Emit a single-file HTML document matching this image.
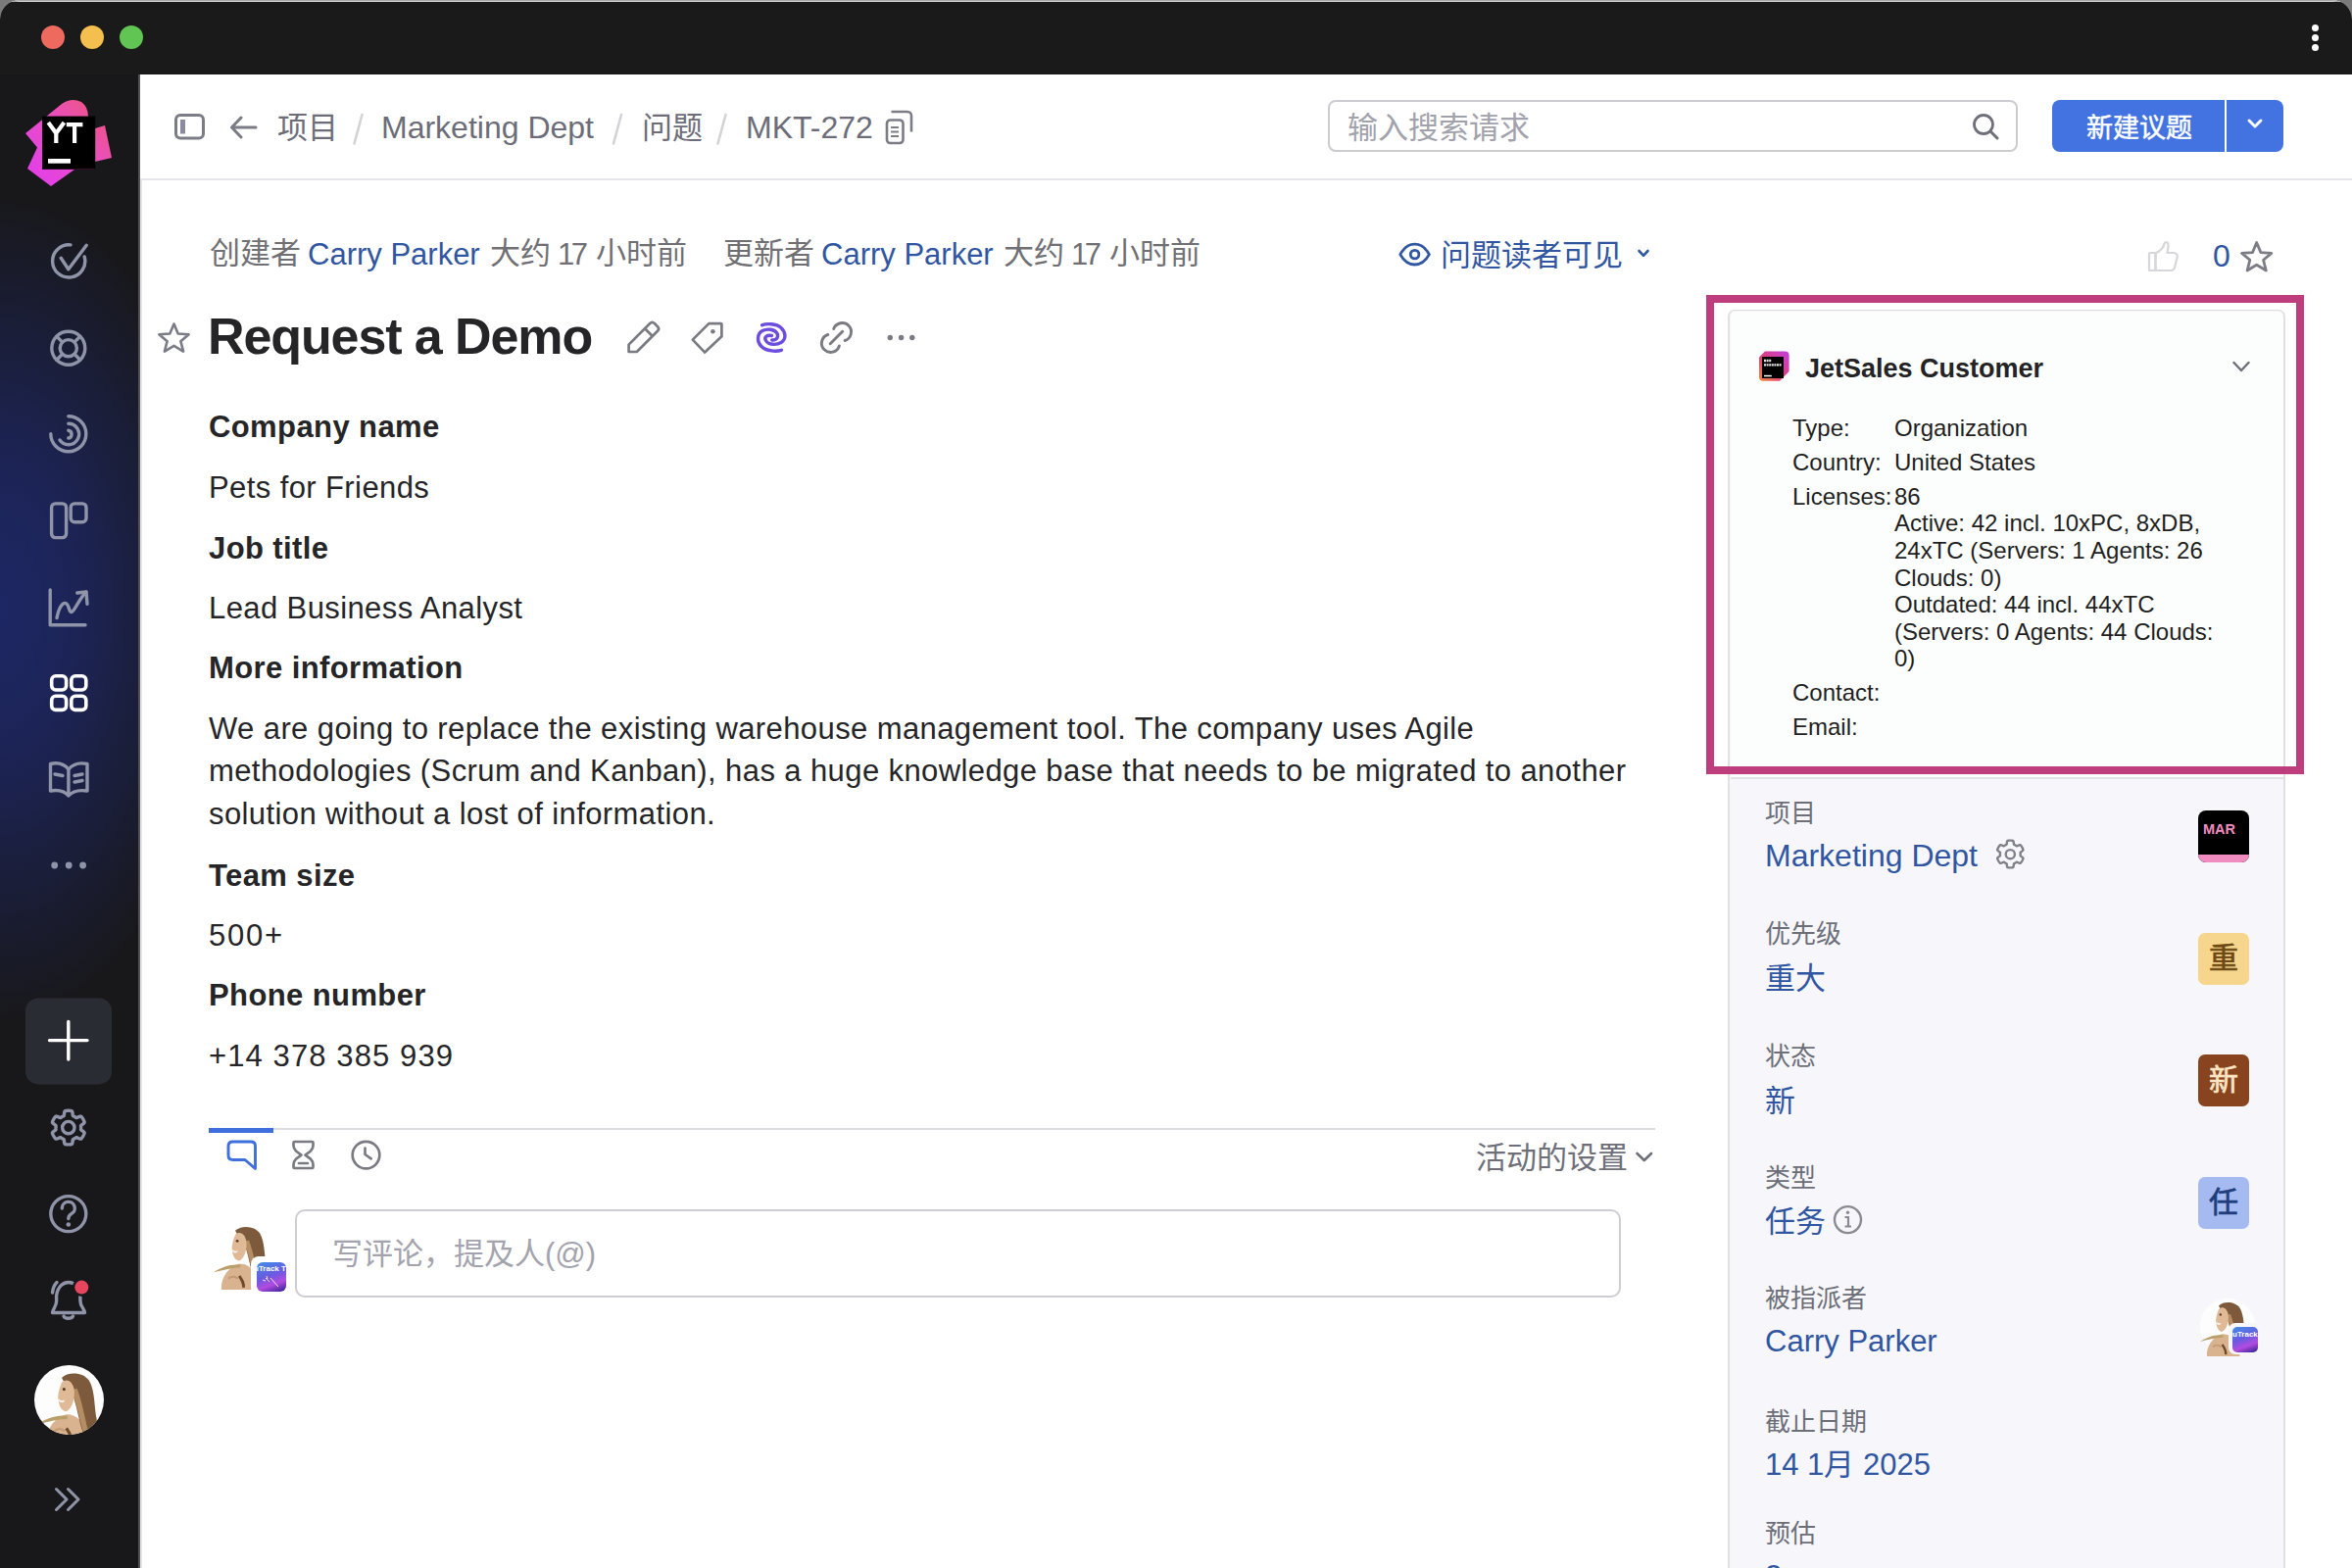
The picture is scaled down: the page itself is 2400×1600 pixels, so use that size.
<!DOCTYPE html>
<html lang="zh-CN">
<head>
<meta charset="utf-8">
<style>
html,body{margin:0;padding:0;}
body{width:2400px;height:1600px;position:relative;overflow:hidden;background:#7a7a7a;font-family:"Liberation Sans",sans-serif;}
.a{position:absolute;}
.t{position:absolute;white-space:nowrap;line-height:1;}
svg{position:absolute;overflow:visible;}
#win{position:absolute;left:0;top:0;width:2400px;height:1600px;border-radius:20px 20px 0 0;overflow:hidden;background:#fff;box-shadow:inset 0 1.5px 0 #a8a8a8;}
#titlebar{position:absolute;left:0;top:1.5px;width:2400px;height:74.5px;background:#1a1a1b;}
.light{position:absolute;width:24px;height:24px;border-radius:50%;top:26px;}
#sidebar{position:absolute;left:0;top:76px;width:141px;height:1524px;background:#18181b;overflow:hidden;}
#sbline{position:absolute;left:141px;top:76px;width:2px;height:1524px;background:#525255;}
#header{position:absolute;left:143px;top:76px;width:2257px;height:106px;background:#fff;}
#hline{position:absolute;left:143px;top:182px;width:2257px;height:2px;background:#e4e4e8;}
.crumb{color:#6c6d78;font-size:32px;}
.slash{color:#d0d0d5;font-size:32px;}
.grey{color:#707074;}
.blue{color:#3056a2;}
.flab{font-size:26px;color:#6c6e78;}
.badge{left:2243px;width:52px;height:52.5px;border-radius:7px;font-size:30px;line-height:52px;text-align:center;-webkit-text-stroke:0.7px currentColor;}
</style>
</head>
<body>
<svg width="0" height="0" style="position:absolute">
  <defs>
    <filter id="avb" x="-10%" y="-10%" width="120%" height="120%"><feGaussianBlur stdDeviation="0.9"/></filter>
    <symbol id="av" viewBox="0 0 100 100">
      <g filter="url(#avb)">
      <path d="M30 100 C28 84 40 66 56 62 C70 62 80 72 84 90 L86 100 Z" fill="#d9b38f"/>
      <path d="M50 14 C58 6 78 6 86 18 C94 32 92 52 96 70 C92 80 84 84 78 86 C72 70 70 50 64 36 C60 28 54 22 50 14 Z" fill="#7d5a3a"/>
      <path d="M62 30 C70 46 72 64 78 84 L84 82 C80 64 76 44 70 28 Z" fill="#b48e62"/>
      <path d="M50 20 C56 14 64 18 66 28 C68 40 64 54 56 58 C50 58 46 50 46 44 C44 40 46 30 50 20 Z" fill="#e0b996"/>
      <path d="M45.5 41 Q50 46 54 42.5 L53 45.5 Q49 48 46 44 Z" fill="#fbf4ee"/>
      <circle cx="53" cy="29" r="2" fill="#5a3a22"/>
      <path d="M18 75 C30 67 44 62 58 64 L57 68 C44 68 32 72 18 75 Z" fill="#b9a06a"/>
      <path d="M56 80 C60 86 63 90 62 97" stroke="#6e4a2c" stroke-width="4" fill="none"/>
      <path d="M40 84 C44 80 50 80 54 84" stroke="#c49a74" stroke-width="3" fill="none"/>
      </g>
    </symbol>
  </defs>
</svg>
<div id="win">
  <div id="titlebar"></div>
  <div class="light" style="left:42px;background:#ee6a5f"></div>
  <div class="light" style="left:82px;background:#f5bf4f"></div>
  <div class="light" style="left:122px;background:#61c554"></div>
  <div class="a" style="left:2359px;top:25px;width:7px;height:7px;border-radius:50%;background:#fff"></div>
  <div class="a" style="left:2359px;top:35px;width:7px;height:7px;border-radius:50%;background:#fff"></div>
  <div class="a" style="left:2359px;top:45px;width:7px;height:7px;border-radius:50%;background:#fff"></div>

  <div id="sidebar">
    <div class="a" style="left:-230px;top:125px;width:460px;height:840px;background:radial-gradient(closest-side,#1d2764 0%,rgba(29,38,96,0.85) 35%,rgba(24,24,27,0) 100%)"></div>
  </div>

  <!-- sidebar icons -->
  <svg style="left:0;top:0" width="141" height="1600">
    <defs>
      <linearGradient id="ytg" x1="0" y1="1" x2="1" y2="0">
        <stop offset="0" stop-color="#e23cf2"/>
        <stop offset="0.55" stop-color="#e84fc0"/>
        <stop offset="1" stop-color="#f2566e"/>
      </linearGradient>
    </defs>
    <path d="M26 136 L47 119 L63 106 Q73 99 83 104 Q90 109 90 119 L97 119 L97 131 L107 128 L114 161 L97 165 L97 173 L76 173 L52 190 L28 172 L38 150.5 Z" fill="url(#ytg)"/>
    <rect x="43" y="118.6" width="54.2" height="54.2" fill="#000"/>
    <path d="M49.3 125 L57.3 136 L57.3 146 M65.4 125 L57.3 136 M67.8 127.2 H84.4 M76.1 127.2 V146" fill="none" stroke="#fff" stroke-width="4.2"/>
    <rect x="49" y="162" width="23" height="4.7" fill="#fff"/>
    <g fill="none" stroke="#8f94a8" stroke-width="3.4" stroke-linecap="round" stroke-linejoin="round">
      <!-- check -->
      <path d="M72 249.9 A16.6 16.6 0 1 0 86.2 262"/>
      <path d="M62.2 263.3 L69.8 274.8 L88.2 250.3"/>
      <!-- lifebuoy -->
      <circle cx="69.8" cy="355.2" r="17"/>
      <circle cx="69.8" cy="355.2" r="8.6"/>
      <path d="M63.7 349.1 L57.8 343.2 M75.9 349.1 L81.8 343.2 M63.7 361.3 L57.8 367.2 M75.9 361.3 L81.8 367.2"/>
      <!-- spiral -->
      <path d="M69.8 424.8 A18 18 0 1 1 51.8 442.8"/>
      <path d="M69.8 432.3 A10.7 10.7 0 1 1 61 449"/>
      <path d="M69.8 439.3 A3.9 3.9 0 0 1 69.8 447"/>
      <!-- board -->
      <rect x="52.6" y="513.9" width="15" height="34.7" rx="4"/>
      <rect x="72.2" y="513.9" width="15.8" height="18.8" rx="4"/>
      <!-- chart -->
      <path d="M51.2 602 V637.8 H87"/>
      <path d="M58 630.6 C60 620 64 614.5 67 615.5 C71 617 70 625 73 624.5 C76 624 80 612 88 604"/>
      <path d="M78.8 605 L88 604 L89 616.3"/>
      <!-- book -->
      <path d="M69.9 812 C65 806 58 806 51.5 807 V779.5 C58 778 65 779 69.9 785 C75 779 82 778 89 779.5 V807 C82 806 75 806 69.9 812 Z"/>
      <path d="M69.9 785 V810"/>
      <path d="M56 790 L64 791.5 M76 791.5 L84 790 M76 798 L84 796.5"/>
      <!-- gear -->
      <path d="M82.60 1150.60 L82.60 1150.94 L82.58 1151.27 L82.56 1151.60 L82.53 1151.94 L82.49 1152.27 L82.53 1152.62 L82.93 1153.03 L83.61 1153.53 L84.43 1154.11 L85.24 1154.74 L85.86 1155.36 L86.17 1155.92 L86.11 1156.37 L85.95 1156.80 L85.78 1157.22 L85.60 1157.64 L85.41 1158.05 L85.21 1158.45 L85.00 1158.85 L84.78 1159.25 L84.55 1159.64 L84.31 1160.02 L84.06 1160.40 L83.80 1160.77 L83.53 1161.13 L83.24 1161.49 L82.96 1161.84 L82.59 1162.11 L81.95 1162.13 L81.10 1161.90 L80.16 1161.52 L79.24 1161.09 L78.47 1160.75 L77.91 1160.62 L77.59 1160.75 L77.32 1160.96 L77.05 1161.15 L76.77 1161.33 L76.49 1161.51 L76.20 1161.69 L75.91 1161.85 L75.61 1162.00 L75.31 1162.15 L75.01 1162.29 L74.70 1162.43 L74.42 1162.63 L74.26 1163.18 L74.16 1164.02 L74.07 1165.03 L73.94 1166.04 L73.71 1166.89 L73.38 1167.43 L72.95 1167.61 L72.51 1167.69 L72.06 1167.75 L71.61 1167.81 L71.16 1167.85 L70.71 1167.88 L70.25 1167.89 L69.80 1167.90 L69.35 1167.89 L68.89 1167.88 L68.44 1167.85 L67.99 1167.81 L67.54 1167.75 L67.09 1167.69 L66.65 1167.61 L66.22 1167.43 L65.89 1166.89 L65.66 1166.04 L65.53 1165.03 L65.44 1164.02 L65.34 1163.18 L65.18 1162.63 L64.90 1162.43 L64.59 1162.29 L64.29 1162.15 L63.99 1162.00 L63.69 1161.85 L63.40 1161.69 L63.11 1161.51 L62.83 1161.33 L62.55 1161.15 L62.28 1160.96 L62.01 1160.75 L61.69 1160.62 L61.13 1160.75 L60.36 1161.09 L59.44 1161.52 L58.50 1161.90 L57.65 1162.13 L57.01 1162.11 L56.64 1161.84 L56.36 1161.49 L56.07 1161.13 L55.80 1160.77 L55.54 1160.40 L55.29 1160.02 L55.05 1159.64 L54.82 1159.25 L54.60 1158.85 L54.39 1158.45 L54.19 1158.05 L54.00 1157.64 L53.82 1157.22 L53.65 1156.80 L53.49 1156.37 L53.43 1155.92 L53.74 1155.36 L54.36 1154.74 L55.17 1154.11 L55.99 1153.53 L56.67 1153.03 L57.07 1152.62 L57.11 1152.27 L57.07 1151.94 L57.04 1151.60 L57.02 1151.27 L57.00 1150.94 L57.00 1150.60 L57.00 1150.26 L57.02 1149.93 L57.04 1149.60 L57.07 1149.26 L57.11 1148.93 L57.07 1148.58 L56.67 1148.17 L55.99 1147.67 L55.17 1147.09 L54.36 1146.46 L53.74 1145.84 L53.43 1145.28 L53.49 1144.83 L53.65 1144.40 L53.82 1143.98 L54.00 1143.56 L54.19 1143.15 L54.39 1142.75 L54.60 1142.35 L54.82 1141.95 L55.05 1141.56 L55.29 1141.18 L55.54 1140.80 L55.80 1140.43 L56.07 1140.07 L56.36 1139.71 L56.64 1139.36 L57.01 1139.09 L57.65 1139.07 L58.50 1139.30 L59.44 1139.68 L60.36 1140.11 L61.13 1140.45 L61.69 1140.58 L62.01 1140.45 L62.28 1140.24 L62.55 1140.05 L62.83 1139.87 L63.11 1139.69 L63.40 1139.51 L63.69 1139.35 L63.99 1139.20 L64.29 1139.05 L64.59 1138.91 L64.90 1138.77 L65.18 1138.57 L65.34 1138.02 L65.44 1137.18 L65.53 1136.17 L65.66 1135.16 L65.89 1134.31 L66.22 1133.77 L66.65 1133.59 L67.09 1133.51 L67.54 1133.45 L67.99 1133.39 L68.44 1133.35 L68.89 1133.32 L69.35 1133.31 L69.80 1133.30 L70.25 1133.31 L70.71 1133.32 L71.16 1133.35 L71.61 1133.39 L72.06 1133.45 L72.51 1133.51 L72.95 1133.59 L73.38 1133.77 L73.71 1134.31 L73.94 1135.16 L74.07 1136.17 L74.16 1137.18 L74.26 1138.02 L74.42 1138.57 L74.70 1138.77 L75.01 1138.91 L75.31 1139.05 L75.61 1139.20 L75.91 1139.35 L76.20 1139.51 L76.49 1139.69 L76.77 1139.87 L77.05 1140.05 L77.32 1140.24 L77.59 1140.45 L77.91 1140.58 L78.47 1140.45 L79.24 1140.11 L80.16 1139.68 L81.10 1139.30 L81.95 1139.07 L82.59 1139.09 L82.96 1139.36 L83.24 1139.71 L83.53 1140.07 L83.80 1140.43 L84.06 1140.80 L84.31 1141.18 L84.55 1141.56 L84.78 1141.95 L85.00 1142.35 L85.21 1142.75 L85.41 1143.15 L85.60 1143.56 L85.78 1143.98 L85.95 1144.40 L86.11 1144.83 L86.17 1145.28 L85.86 1145.84 L85.24 1146.46 L84.43 1147.09 L83.61 1147.67 L82.93 1148.17 L82.53 1148.58 L82.49 1148.93 L82.53 1149.26 L82.56 1149.60 L82.58 1149.93 L82.60 1150.26 Z"/>
      <circle cx="69.8" cy="1150.6" r="6.2"/>
      <!-- help -->
      <circle cx="69.8" cy="1238.6" r="18"/>
      <path d="M63.3 1233 A6.5 6.5 0 1 1 72.8 1238.6 C70.8 1239.8 69.8 1241 69.8 1243.5"/>
      <!-- bell -->
      <path d="M57.6 1322 C59 1312 65 1308.5 70 1308.5 C76 1308.5 80.5 1313 81.8 1320 L82 1328 C82 1333 86 1335.5 86.5 1339.5 H53.5 C54 1335.5 57.5 1333 57.6 1328 Z"/>
      <path d="M65 1343 C66 1346 73 1346 74.5 1343"/>
      <path d="M53.5 1319 C54 1314.5 55.5 1311 58 1308.5"/>
      <!-- chevrons -->
      <path d="M57.5 1519.5 L68 1530 L57.5 1540.5 M69.5 1519.5 L80 1530 L69.5 1540.5" stroke-width="3"/>
    </g>
    <g fill="none" stroke="#fff" stroke-width="3.6">
      <rect x="52.7" y="689.8" width="14.9" height="14.2" rx="4.2"/>
      <rect x="72.8" y="689.8" width="15" height="14.2" rx="4.2"/>
      <rect x="52.7" y="710.2" width="14.9" height="14.2" rx="4.2"/>
      <rect x="72.8" y="710.2" width="15" height="14.2" rx="4.2"/>
    </g>
    <circle cx="55.7" cy="883" r="3.4" fill="#8f94a8"/>
    <circle cx="70.2" cy="883" r="3.4" fill="#8f94a8"/>
    <circle cx="84.6" cy="883" r="3.4" fill="#8f94a8"/>
    <rect x="26" y="1018.4" width="88" height="88" rx="13" fill="#2a2c33"/>
    <path d="M69.8 1042.5 V1081 M50.5 1061.6 H89" stroke="#fff" stroke-width="3.4" stroke-linecap="round"/>
    <circle cx="83.3" cy="1313.6" r="9.5" fill="#18181b"/><circle cx="83.3" cy="1313.6" r="7" fill="#e8465e"/>
    <circle cx="69.8" cy="1249.5" r="2.3" fill="#8f94a8"/>
  </svg>
  <!-- sidebar avatar -->
  <div class="a" style="left:35px;top:1392.5px;width:71px;height:71.5px;border-radius:50%;background:#fdfdfd;overflow:hidden"><svg style="left:-11px;top:2px;filter:blur(0.5px)" width="78" height="78"><use href="#av"/></svg></div>

  <div id="sbline"></div>

  <div id="header"></div>
  <div id="hline"></div>
  <div class="a" style="left:143px;top:183px;width:2px;height:1417px;background:#e6e6ea"></div>

  <!-- breadcrumb -->
  <svg style="left:0;top:0" width="1000" height="200"><g stroke="#d3d3d8" stroke-width="2.6" stroke-linecap="round"><path d="M369.5 117 L361.5 146.5"/><path d="M634 117 L626 146.5"/><path d="M740.5 117 L732.5 146.5"/></g></svg>
  <div class="t crumb" style="left:283px;top:115px;font-size:31px">项目</div>
  
  <div class="t crumb" style="left:389px;top:114px">Marketing Dept</div>
  
  <div class="t crumb" style="left:655px;top:115px;font-size:31px">问题</div>
  
  <div class="t crumb" style="left:761px;top:114px">MKT-272</div>


  <!-- header icons -->
  <svg style="left:0;top:0" width="2400" height="200">
    <rect x="179.5" y="117.5" width="28" height="23.5" rx="4.5" fill="none" stroke="#7b7c86" stroke-width="3"/>
    <rect x="184" y="122" width="5" height="14.5" fill="#8a8aa0"/>
    <path d="M237 130 H261 M246 120 L236.5 130 L246 140" fill="none" stroke="#7b7c86" stroke-width="3" stroke-linecap="round" stroke-linejoin="round"/>
    <!-- copy icon -->
    <path d="M908.5 122.5 h9.5 a3.5 3.5 0 0 1 3.5 3.5 v16.5 a3.5 3.5 0 0 1 -3.5 3.5 h-9.5 a3.5 3.5 0 0 1 -3.5 -3.5 v-16.5 a3.5 3.5 0 0 1 3.5 -3.5 z" fill="none" stroke="#7b7c86" stroke-width="2.6"/>
    <path d="M909.5 114 h16.5 a4 4 0 0 1 4 4 v16.5" fill="none" stroke="#7b7c86" stroke-width="2.6"/>
    <path d="M909 130 h8 M909 134.5 h8 M909 139 h8" stroke="#7b7c86" stroke-width="2.2"/>
  </svg>

  <!-- search -->
  <div class="a" style="left:1355px;top:102px;width:700px;height:49px;border:2px solid #cbcbd1;border-radius:8px;background:#fff"></div>
  <div class="t" style="left:1375px;top:115px;font-size:31px;color:#a2a2ac">输入搜索请求</div>
  <svg style="left:0;top:0" width="2400" height="200">
    <circle cx="2024" cy="127" r="9.5" fill="none" stroke="#6e6f78" stroke-width="2.8"/>
    <path d="M2031 134 L2038 141" stroke="#6e6f78" stroke-width="3" stroke-linecap="round"/>
  </svg>
  <!-- new issue button -->
  <div class="a" style="left:2094px;top:102px;width:236px;height:53px;border-radius:8px;background:#4273e0"></div>
  <div class="a" style="left:2270px;top:102px;width:2px;height:53px;background:#fff"></div>
  <div class="t" style="left:2129px;top:118px;font-size:27px;-webkit-text-stroke:0.5px #fff;color:#fff">新建议题</div>
  <svg style="left:0;top:0" width="2400" height="200">
    <path d="M2295 123 L2301 129 L2307 123" fill="none" stroke="#fff" stroke-width="3" stroke-linecap="round" stroke-linejoin="round"/>
  </svg>

  <!-- meta -->
  <div class="t grey" style="left:214px;top:243px;font-size:31px">创建者</div>
  <div class="t blue" style="left:314px;top:244px;font-size:31px">Carry Parker</div>
  <div class="t grey" style="left:500px;top:243px;font-size:31px">大约</div>
  <div class="t grey" style="left:569px;top:244px;font-size:31px;letter-spacing:-3.5px">17</div>
  <div class="t grey" style="left:608px;top:243px;font-size:31px">小时前</div>
  <div class="t grey" style="left:738px;top:243px;font-size:31px">更新者</div>
  <div class="t blue" style="left:838px;top:244px;font-size:31px">Carry Parker</div>
  <div class="t grey" style="left:1024px;top:243px;font-size:31px">大约</div>
  <div class="t grey" style="left:1093px;top:244px;font-size:31px;letter-spacing:-3.5px">17</div>
  <div class="t grey" style="left:1132px;top:243px;font-size:31px">小时前</div>



  <!-- meta right -->
  <svg style="left:0;top:0" width="2400" height="400">
    <path d="M1428.8 259.6 C1433 252 1438 249.2 1443.6 249.2 C1449.2 249.2 1454.2 252 1458.4 259.6 C1454.2 267.2 1449.2 270 1443.6 270 C1438 270 1433 267.2 1428.8 259.6 Z" fill="none" stroke="#2f57a4" stroke-width="2.8" stroke-linejoin="round"/>
    <circle cx="1443.6" cy="259.6" r="4.3" fill="none" stroke="#2f57a4" stroke-width="2.8"/>
    <path d="M1672.5 256 L1677 260.8 L1681.5 256" fill="none" stroke="#2f57a4" stroke-width="2.6" stroke-linecap="round" stroke-linejoin="round"/>
    <!-- thumb -->
    <path d="M2199.5 276 H2193.5 Q2193 276 2193 275.5 V259 Q2193 258 2194 258 H2199.5 Z" fill="none" stroke="#d6d6db" stroke-width="2.2" stroke-linejoin="round"/>
    <path d="M2199.5 258 C2204 257 2208 252 2208.5 248.5 Q2209.5 246.5 2211.5 247.5 Q2212.8 249 2212.5 252 L2211.5 258 H2218 Q2222 258.5 2221.8 262 L2219 273 Q2218 276 2215 276 H2199.5 Z" fill="none" stroke="#d6d6db" stroke-width="2.2" stroke-linejoin="round"/>
    <!-- star -->
    <path d="M2302.7 247.5 L2306.9 257.6 L2317.8 258.4 L2309.6 265.3 L2312.3 276 L2302.7 270.2 L2293.1 276 L2295.8 265.3 L2287.6 258.4 L2298.5 257.6 Z" fill="none" stroke="#7c7c86" stroke-width="2.8" stroke-linejoin="round"/>
    <!-- title star -->
    <path d="M177.5 330.5 L181.7 340.5 L192.6 341.3 L184.4 348.2 L187.1 358.6 L177.5 352.9 L167.9 358.6 L170.6 348.2 L162.4 341.3 L173.3 340.5 Z" fill="none" stroke="#7a7b86" stroke-width="2.6" stroke-linejoin="round"/>
    <!-- pencil -->
    <path d="M641.6 359 V351.6 L663.2 330 Q665.5 327.7 667.8 330 L671 333.2 Q673.3 335.5 671 337.8 L649.8 359 Z M658 335.2 L665.8 343" fill="none" stroke="#7a7a82" stroke-width="2.7" stroke-linejoin="round"/>
    <!-- tag -->
    <path d="M706.8 346.6 L723.3 330.1 H735.6 Q736.4 330.1 736.4 331 V343.2 L719.2 359.6 Z" fill="none" stroke="#7a7a82" stroke-width="2.7" stroke-linejoin="round"/>
    <circle cx="727.4" cy="338.3" r="2.3" fill="#7a7a82"/>
    <!-- spiral -->
    <g fill="none" stroke="#6c4ddf" stroke-width="3.4" stroke-linecap="round">
      <path d="M777.6 331.8 C782 330 792 330 797 334.5 C802 339 802.5 346 797 349.5 C792 352.5 784 352 781.5 347.5 C779.5 344 782.5 341.5 787.5 342.5"/>
      <path d="M797.4 357.3 C792 359 782 358.5 777 353.5 C772 348.5 772.5 340.5 778 337.5 C783 335 790 336 792.5 339.5 C795 343 793 347.5 787.7 347"/>
    </g>
    <!-- link -->
    <g fill="none" stroke="#7a7a82" stroke-width="2.9" stroke-linecap="round">
      <path d="M847.2 350.7 L859.7 338.2"/>
      <path d="M850.7 335.6 A9.2 9.2 0 1 1 862.1 347.5"/>
      <path d="M844.8 341.5 A9.2 9.2 0 1 0 856.4 353"/>
    </g>
    <circle cx="908.3" cy="344.5" r="2.7" fill="#7a7a82"/>
    <circle cx="919.6" cy="344.5" r="2.7" fill="#7a7a82"/>
    <circle cx="930.8" cy="344.5" r="2.7" fill="#7a7a82"/>
  </svg>
  <div class="t blue" style="left:1470px;top:245px;font-size:31px">问题读者可见</div>
  <div class="t blue" style="left:2258px;top:245px;font-size:32px">0</div>

  <!-- title -->
  <div class="t" style="left:212px;top:317px;font-size:52px;font-weight:bold;letter-spacing:-1.1px;color:#252528">Request a Demo</div>


  <!-- right panel -->
  <div class="a" style="left:1763px;top:316px;width:565px;height:1300px;background:#f7f7fb;border-left:2px solid #e0e0e5;border-right:2px solid #e0e0e5;border-top:1.5px solid #dcdde0;border-radius:7px 7px 0 0"></div>
  <div class="a" style="left:1766px;top:318px;width:564px;height:476px;background:#fcfdfd;border-radius:5px 5px 0 0"></div>
  <div class="a" style="left:1766px;top:793px;width:564px;height:2px;background:#e1e2e5"></div>
  <div class="a" style="left:1741px;top:301px;width:594px;height:473px;border:8.5px solid #be3e7d"></div>

  <svg style="left:0;top:0" width="2400" height="1600">
    <defs>
      <linearGradient id="jbg" x1="0" y1="1" x2="1" y2="0">
        <stop offset="0" stop-color="#f08a3c"/>
        <stop offset="0.45" stop-color="#e0407a"/>
        <stop offset="1" stop-color="#c23ee0"/>
      </linearGradient>
    </defs>
    <path d="M1801 358.5 H1821.5 Q1825.6 358.5 1825.6 362.6 V379 L1816 388.7 H1799 Q1795 388.7 1795 384.7 V364.5 Z" fill="url(#jbg)"/>
    <rect x="1798" y="364" width="22" height="22" fill="#000"/>
    <rect x="1800" y="382.8" width="7.8" height="1.5" fill="#fff"/>
    <path d="M1800 368 h7.7 M1800 372.4 h17.6" stroke="#fff" stroke-width="2.4" stroke-dasharray="2 0.6" opacity="0.9"/>
    <path d="M2279.5 370 L2287 378 L2294.5 370" fill="none" stroke="#6e6f78" stroke-width="2.4" stroke-linecap="round" stroke-linejoin="round"/>
  </svg>
  <div class="t" style="left:1842px;top:362.5px;font-size:27px;font-weight:bold;color:#232326">JetSales Customer</div>
  <div style="position:absolute;left:0;top:0;font-size:24px;color:#1f1f22">
    <div class="t" style="left:1829px;top:425.3px">Type:</div>
    <div class="t" style="left:1933px;top:425.3px">Organization</div>
    <div class="t" style="left:1829px;top:460.3px">Country:</div>
    <div class="t" style="left:1933px;top:460.3px">United States</div>
    <div class="t" style="left:1829px;top:494.7px">Licenses:</div>
    <div class="t" style="left:1933px;top:494.7px">86</div>
    <div class="t" style="left:1933px;top:522.3px">Active: 42 incl. 10xPC, 8xDB,</div>
    <div class="t" style="left:1933px;top:549.7px">24xTC (Servers: 1 Agents: 26</div>
    <div class="t" style="left:1933px;top:577.7px">Clouds: 0)</div>
    <div class="t" style="left:1933px;top:605.2px">Outdated: 44 incl. 44xTC</div>
    <div class="t" style="left:1933px;top:632.7px">(Servers: 0 Agents: 44 Clouds:</div>
    <div class="t" style="left:1933px;top:659.7px">0)</div>
    <div class="t" style="left:1829px;top:694.5px">Contact:</div>
    <div class="t" style="left:1829px;top:729.7px">Email:</div>
  </div>

  <!-- fields -->
  <div style="position:absolute;left:1801px;top:0">
    <div class="t flab" style="top:817px">项目</div>
    <div class="t blue" style="top:857px;font-size:32px">Marketing Dept</div>
    <div class="t flab" style="top:940px">优先级</div>
    <div class="t blue" style="top:982.5px;font-size:31px">重大</div>
    <div class="t flab" style="top:1065px">状态</div>
    <div class="t blue" style="top:1107.5px;font-size:31px">新</div>
    <div class="t flab" style="top:1189px">类型</div>
    <div class="t blue" style="top:1230.5px;font-size:31px">任务</div>
    <div class="t flab" style="top:1312px">被指派者</div>
    <div class="t blue" style="top:1353px;font-size:31px">Carry Parker</div>
    <div class="t flab" style="top:1438px">截止日期</div>
    <div class="t blue" style="top:1479px;font-size:31px">14 1月 2025</div>
    <div class="t flab" style="top:1552px">预估</div>
    <div class="t blue" style="top:1592.5px;font-size:31px">2</div>
  </div>
  <svg style="left:0;top:0" width="2400" height="1600">
    <path d="M2061.70 871.50 L2061.70 871.77 L2061.69 872.04 L2061.67 872.32 L2061.64 872.59 L2061.61 872.86 L2061.64 873.14 L2061.95 873.47 L2062.47 873.87 L2063.11 874.34 L2063.74 874.83 L2064.22 875.33 L2064.45 875.77 L2064.40 876.14 L2064.28 876.48 L2064.14 876.82 L2064.00 877.15 L2063.85 877.48 L2063.68 877.81 L2063.52 878.13 L2063.34 878.45 L2063.15 878.76 L2062.96 879.07 L2062.76 879.37 L2062.55 879.67 L2062.33 879.96 L2062.10 880.25 L2061.87 880.53 L2061.58 880.75 L2061.07 880.77 L2060.41 880.61 L2059.66 880.31 L2058.94 879.99 L2058.33 879.73 L2057.89 879.64 L2057.63 879.75 L2057.41 879.91 L2057.19 880.07 L2056.96 880.22 L2056.73 880.37 L2056.50 880.51 L2056.26 880.64 L2056.02 880.77 L2055.78 880.89 L2055.53 881.00 L2055.28 881.11 L2055.05 881.28 L2054.91 881.71 L2054.83 882.36 L2054.75 883.15 L2054.63 883.94 L2054.45 884.60 L2054.18 885.03 L2053.83 885.17 L2053.47 885.23 L2053.11 885.28 L2052.75 885.32 L2052.39 885.36 L2052.03 885.38 L2051.66 885.40 L2051.30 885.40 L2050.94 885.40 L2050.57 885.38 L2050.21 885.36 L2049.85 885.32 L2049.49 885.28 L2049.13 885.23 L2048.77 885.17 L2048.42 885.03 L2048.15 884.60 L2047.97 883.94 L2047.85 883.15 L2047.77 882.36 L2047.69 881.71 L2047.55 881.28 L2047.32 881.11 L2047.07 881.00 L2046.82 880.89 L2046.58 880.77 L2046.34 880.64 L2046.10 880.51 L2045.87 880.37 L2045.64 880.22 L2045.41 880.07 L2045.19 879.91 L2044.97 879.75 L2044.71 879.64 L2044.27 879.73 L2043.66 879.99 L2042.94 880.31 L2042.19 880.61 L2041.53 880.77 L2041.02 880.75 L2040.73 880.53 L2040.50 880.25 L2040.27 879.96 L2040.05 879.67 L2039.84 879.37 L2039.64 879.07 L2039.45 878.76 L2039.26 878.45 L2039.08 878.13 L2038.92 877.81 L2038.75 877.48 L2038.60 877.15 L2038.46 876.82 L2038.32 876.48 L2038.20 876.14 L2038.15 875.77 L2038.38 875.33 L2038.86 874.83 L2039.49 874.34 L2040.13 873.87 L2040.65 873.47 L2040.96 873.14 L2040.99 872.86 L2040.96 872.59 L2040.93 872.32 L2040.91 872.04 L2040.90 871.77 L2040.90 871.50 L2040.90 871.23 L2040.91 870.96 L2040.93 870.68 L2040.96 870.41 L2040.99 870.14 L2040.96 869.86 L2040.65 869.53 L2040.13 869.13 L2039.49 868.66 L2038.86 868.17 L2038.38 867.67 L2038.15 867.23 L2038.20 866.86 L2038.32 866.52 L2038.46 866.18 L2038.60 865.85 L2038.75 865.52 L2038.92 865.19 L2039.08 864.87 L2039.26 864.55 L2039.45 864.24 L2039.64 863.93 L2039.84 863.63 L2040.05 863.33 L2040.27 863.04 L2040.50 862.75 L2040.73 862.47 L2041.02 862.25 L2041.53 862.23 L2042.19 862.39 L2042.94 862.69 L2043.66 863.01 L2044.27 863.27 L2044.71 863.36 L2044.97 863.25 L2045.19 863.09 L2045.41 862.93 L2045.64 862.78 L2045.87 862.63 L2046.10 862.49 L2046.34 862.36 L2046.58 862.23 L2046.82 862.11 L2047.07 862.00 L2047.32 861.89 L2047.55 861.72 L2047.69 861.29 L2047.77 860.64 L2047.85 859.85 L2047.97 859.06 L2048.15 858.40 L2048.42 857.97 L2048.77 857.83 L2049.13 857.77 L2049.49 857.72 L2049.85 857.68 L2050.21 857.64 L2050.57 857.62 L2050.94 857.60 L2051.30 857.60 L2051.66 857.60 L2052.03 857.62 L2052.39 857.64 L2052.75 857.68 L2053.11 857.72 L2053.47 857.77 L2053.83 857.83 L2054.18 857.97 L2054.45 858.40 L2054.63 859.06 L2054.75 859.85 L2054.83 860.64 L2054.91 861.29 L2055.05 861.72 L2055.28 861.89 L2055.53 862.00 L2055.78 862.11 L2056.02 862.23 L2056.26 862.36 L2056.50 862.49 L2056.73 862.63 L2056.96 862.78 L2057.19 862.93 L2057.41 863.09 L2057.63 863.25 L2057.89 863.36 L2058.33 863.27 L2058.94 863.01 L2059.66 862.69 L2060.41 862.39 L2061.07 862.23 L2061.58 862.25 L2061.87 862.47 L2062.10 862.75 L2062.33 863.04 L2062.55 863.33 L2062.76 863.63 L2062.96 863.93 L2063.15 864.24 L2063.34 864.55 L2063.52 864.87 L2063.68 865.19 L2063.85 865.52 L2064.00 865.85 L2064.14 866.18 L2064.28 866.52 L2064.40 866.86 L2064.45 867.23 L2064.22 867.67 L2063.74 868.17 L2063.11 868.66 L2062.47 869.13 L2061.95 869.53 L2061.64 869.86 L2061.61 870.14 L2061.64 870.41 L2061.67 870.68 L2061.69 870.96 L2061.70 871.23 Z" fill="none" stroke="#808088" stroke-width="2.4" stroke-linejoin="round"/>
    <circle cx="2051.3" cy="871.7" r="4.6" fill="none" stroke="#808088" stroke-width="2.4"/>
    <circle cx="1885.5" cy="1244.6" r="13.5" fill="none" stroke="#8a8a92" stroke-width="2.4"/>
    <circle cx="1885.5" cy="1237.3" r="1.7" fill="#8a8a92"/>
    <path d="M1882.5 1242 H1886 V1251.5 M1882.5 1251.5 H1889" fill="none" stroke="#8a8a92" stroke-width="2.2"/>
  </svg>
  <div class="a" style="left:2243px;top:827px;width:52px;height:52.5px;border-radius:8px;background:#000;overflow:hidden">
    <div class="a" style="left:0;top:45px;width:52px;height:8px;background:#f08cc0"></div>
    <div class="t" style="left:5px;top:12px;font-size:14.5px;font-weight:bold;color:#f08cc0">MAR</div>
  </div>
  <div class="a badge" style="top:952px;background:#f6d58c;color:#6e4913">重</div>
  <div class="a badge" style="top:1076px;background:#88441e;color:#fde4c4">新</div>
  <div class="a badge" style="top:1201px;background:#a5baf1;color:#203d7c">任</div>
  <div class="a" style="left:2245px;top:1325px;width:56px;height:56px;border-radius:50%;background:#fdfdfe"></div>
  <svg style="left:2234px;top:1324px;filter:blur(0.5px)" width="60" height="60"><use href="#av"/></svg>
  <div class="a" style="left:2274px;top:1350px;width:32px;height:32px;border-radius:7px;background:#f7f7fb"></div>
  <div class="a" style="left:2278px;top:1354px;width:26px;height:26px;border-radius:5px;background:linear-gradient(160deg,#3f8fe8 0%,#6a5ae0 45%,#b24be0 70%,#2a2090 100%)"></div>
  <div class="t" style="left:2278px;top:1358px;font-size:8px;font-weight:bold;color:#fff;width:26px;overflow:hidden">uTrack T</div>

  <!-- description -->
  <div id="desc" style="position:absolute;left:213px;top:0;color:#252528;font-size:31px;letter-spacing:0.4px">
    <div class="t" style="top:420px;font-weight:bold">Company name</div>
    <div class="t" style="top:482px">Pets for Friends</div>
    <div class="t" style="top:544px;font-weight:bold">Job title</div>
    <div class="t" style="top:605px">Lead Business Analyst</div>
    <div class="t" style="top:666px;font-weight:bold">More information</div>
    <div class="t" style="top:728px">We are going to replace the existing warehouse management tool. The company uses Agile</div>
    <div class="t" style="top:771px">methodologies (Scrum and Kanban), has a huge knowledge base that needs to be migrated to another</div>
    <div class="t" style="top:815px">solution without a lost of information.</div>
    <div class="t" style="top:878px;font-weight:bold">Team size</div>
    <div class="t" style="top:939px;letter-spacing:1.8px">500+</div>
    <div class="t" style="top:1000px;font-weight:bold">Phone number</div>
    <div class="t" style="top:1062px;letter-spacing:1.1px">+14 378 385 939</div>
  </div>

  <!-- activity -->
  <div class="a" style="left:213px;top:1151px;width:1476px;height:2px;background:#dcdce0"></div>
  <div class="a" style="left:213px;top:1151px;width:66px;height:5px;background:#3f6fde"></div>
  <svg style="left:0;top:0" width="2400" height="1400">
    <path d="M237.5 1165 H256 Q260.5 1165 260.5 1169.5 V1192.5 L250 1183.5 H237.5 Q233 1183.5 233 1179 V1169.5 Q233 1165 237.5 1165 Z" fill="none" stroke="#3f6fde" stroke-width="2.9" stroke-linejoin="round"/>
    <path d="M300.5 1165 H318.5 Q319.5 1165 319.5 1166 V1169 Q319.5 1172 317 1174.5 L311.5 1178.6 L317 1182.7 Q319.5 1185 319.5 1188.5 V1191 Q319.5 1192 318.5 1192 H300.5 Q299.5 1192 299.5 1191 V1188.5 Q299.5 1185 302 1182.7 L307.5 1178.6 L302 1174.5 Q299.5 1172 299.5 1169 V1166 Q299.5 1165 300.5 1165 Z" fill="none" stroke="#7a7a82" stroke-width="2.7" stroke-linejoin="round"/>
    <path d="M305 1187 H314" stroke="#7a7a82" stroke-width="2.7" stroke-linecap="round"/>
    <circle cx="373.5" cy="1178.6" r="13.8" fill="none" stroke="#7a7a82" stroke-width="2.7"/>
    <path d="M372.5 1171.5 V1178 L378.7 1182.3" fill="none" stroke="#7a7a82" stroke-width="2.7" stroke-linecap="round" stroke-linejoin="round"/>
    <path d="M1670.5 1177 L1677.8 1184 L1685 1177" fill="none" stroke="#6e6f78" stroke-width="2.6" stroke-linecap="round" stroke-linejoin="round"/>
  </svg>
  <div class="t" style="left:1506px;top:1165.5px;font-size:31px;color:#6e6f78">活动的设置</div>

  <!-- comment -->
  <svg style="left:205px;top:1246px;filter:blur(0.5px)" width="70" height="70"><use href="#av"/></svg>
  <div class="a" style="left:256px;top:1282px;width:40px;height:40px;border-radius:8px;background:#fff"></div>
  <div class="a" style="left:262px;top:1288px;width:30px;height:30px;border-radius:6px;background:linear-gradient(160deg,#3f8fe8 0%,#6a5ae0 45%,#b24be0 70%,#2a2090 100%)"></div>
  <div class="t" style="left:261px;top:1291px;font-size:8px;font-weight:bold;color:#fff;width:31px;overflow:hidden;text-indent:-2px">uTrack T</div>
  <svg style="left:0;top:0" width="400" height="1400"><path d="M271 1304 l4 4 M272 1302 l1 3 M268 1306 l3 1 M276 1304 l8 9" stroke="#f0e0ff" stroke-width="1" fill="none"/></svg>
  <div class="a" style="left:301px;top:1234px;width:1349px;height:86px;border:2px solid #cdcdd3;border-radius:10px;background:#fff"></div>
  <div class="t" style="left:339px;top:1264px;font-size:31px;color:#a3a3ad">写评论，提及人(@)</div>
</div>
</body>
</html>
